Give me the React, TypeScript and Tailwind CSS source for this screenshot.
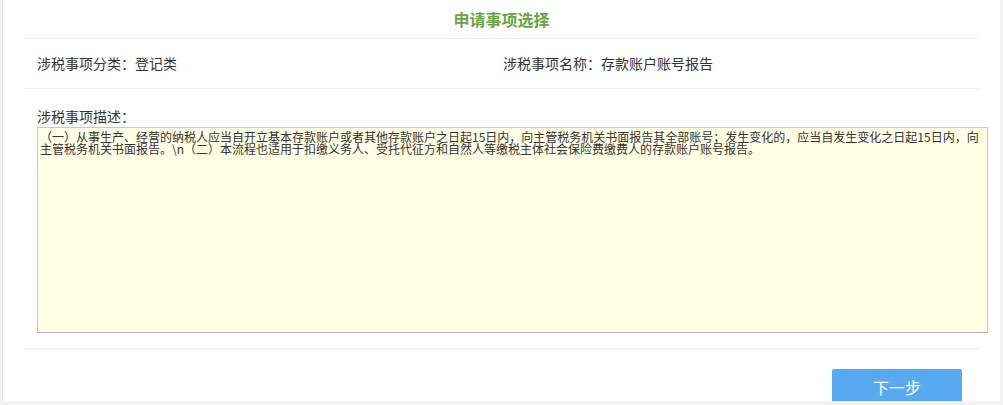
// 申请事项选择

const desc =
  '（一）从事生产、经营的纳税人应当自开立基本存款账户或者其他存款账户之日起15日内，向主管税务机关书面报告其全部账号；发生变化的，应当自发生变化之日起15日内，向主管税务机关书面报告。\\n（二）本流程也适用于扣缴义务人、受托代征方和自然人等缴税主体社会保险费缴费人的存款账户账号报告。';

export default function App() {
  return (
    <div
      className="h-[405px] bg-[#f3f3f3] pl-[2px] pr-[3px] text-[#333]"
      style={{ fontFamily: '"Microsoft YaHei", "Noto Sans CJK SC", sans-serif' }}
    >
      <div className="h-[401px] overflow-hidden border-l border-[#e4e4e4] bg-white">
        {/* 标题 */}
        <div className="mx-[20px] flex h-[39px] items-center justify-center border-b border-[#eeeeee] text-[16px] font-semibold text-[#68a545]">
          申请事项选择
        </div>

        {/* 分类与名称 */}
        <div className="mx-[20px] flex h-[50px] items-center border-b border-[#eeeeee] text-[14px]">
          <div className="w-[480px] pl-[14px]">涉税事项分类：登记类</div>
          <div>涉税事项名称：存款账户账号报告</div>
        </div>

        {/* 描述 */}
        <div className="pl-[34px] pr-[12px]">
          <div className="flex h-[38px] items-end text-[14px]">涉税事项描述：</div>
          <textarea
            readOnly
            value={desc}
            className="block h-[206px] w-[951px] resize-none border border-[#c9c9c9] border-b-[#b5b5b5] bg-[#ffffe6] px-[2px] pt-[3px] text-[12px] leading-[12px] text-[#333] outline-none"
            style={{ fontFamily: '"Noto Sans CJK SC", sans-serif' }}
          />
        </div>

        <div className="mx-[20px] mt-[15px] border-b border-[#eeeeee]" />

        {/* 操作 */}
        <div className="flex justify-end pr-[38px] pt-[20px]">
          <button className="h-[36px] w-[130px] rounded-[2px] bg-[#58aaf0] text-[16px] text-white">
            下一步
          </button>
        </div>
      </div>
    </div>
  );
}
